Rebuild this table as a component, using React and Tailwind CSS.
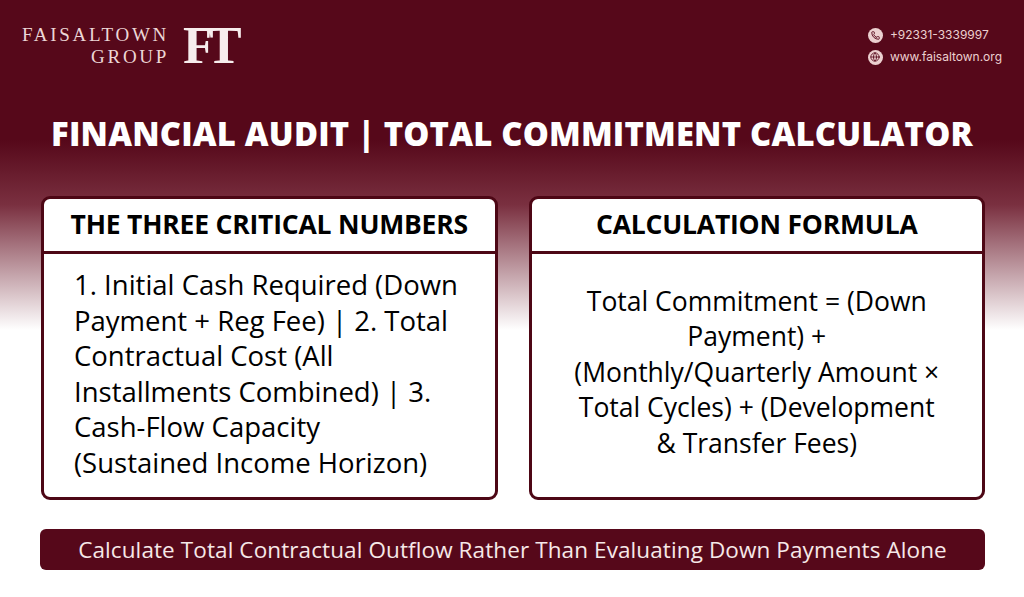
import { Phone, Globe } from 'lucide-react'

const leftLines = [
  "1. Initial Cash Required (Down",
  "Payment + Reg Fee) | 2. Total",
  "Contractual Cost (All",
  "Installments Combined) | 3.",
  "Cash-Flow Capacity",
  "(Sustained Income Horizon)",
];

const rightLines = [
  "Total Commitment = (Down",
  "Payment) +",
  "(Monthly/Quarterly Amount ×",
  "Total Cycles) + (Development",
  "& Transfer Fees)",
];

function Card({ title, children }) {
  return (
    <div className="flex flex-col h-[304px] bg-white border-[3px] border-[#4d0715] rounded-[9px] overflow-hidden">
      <div className="h-[55px] flex items-center justify-center border-b-[3px] border-[#4d0715]">
        <h2 className="text-[26.5px] font-bold text-black tracking-[-0.2px]">{title}</h2>
      </div>
      {children}
    </div>
  );
}

function App() {
  return (
    <div
      className="w-[1024px] h-[597px] overflow-hidden bg-[linear-gradient(to_bottom,#56081a_0px,#56081a_140px,#7a3040_205px,#ffffff_330px,#ffffff_597px)]"
      style={{ fontFamily: '"Open Sans", "Liberation Sans", sans-serif' }}
    >
      <div className="flex justify-between items-start pl-[22px] pr-[22px] pt-[19px]">
        <div className="flex items-center gap-[14px]">
          <div className="flex flex-col items-end text-[#ecd6d6] leading-[22px]" style={{ fontFamily: '"Liberation Serif", serif' }}>
            <span className="text-[19px] tracking-[2.7px]">FAISALTOWN</span>
            <span className="text-[19px] tracking-[2.7px]">GROUP</span>
          </div>
          <span className="text-[53px] leading-none text-[#f7eded] tracking-[-9px] font-bold" style={{ fontFamily: '"Liberation Serif", serif' }}>FT</span>
        </div>
        <div className="flex flex-col gap-[4px] pt-[7px] text-[12px] text-[#ecd0d0]" style={{ fontFamily: '"Inter", sans-serif' }}>
          <div className="flex items-center gap-[7px]">
            <span className="w-[15px] h-[15px] rounded-full bg-[#ecd0d0] flex items-center justify-center">
              <Phone size={9} strokeWidth={2.5} className="text-[#56081a]" />
            </span>
            <span>+92331-3339997</span>
          </div>
          <div className="flex items-center gap-[7px]">
            <span className="w-[15px] h-[15px] rounded-full bg-[#ecd0d0] flex items-center justify-center">
              <Globe size={10} strokeWidth={2} className="text-[#56081a]" />
            </span>
            <span>www.faisaltown.org</span>
          </div>
        </div>
      </div>

      <h1 className="mt-[42px] text-center text-[32.8px] font-extrabold text-white leading-[40px] tracking-[0.2px]">
        FINANCIAL AUDIT | TOTAL COMMITMENT CALCULATOR
      </h1>

      <div className="grid grid-cols-2 gap-[31px] pl-[41px] pr-[39px] mt-[42px]">
        <Card title="THE THREE CRITICAL NUMBERS">
          <div className="flex-1 pl-[30px] pt-[13px] text-[27.5px] leading-[35.5px] text-black">
            {leftLines.map((l) => (
              <div key={l} className="whitespace-nowrap">{l}</div>
            ))}
          </div>
        </Card>
        <Card title="CALCULATION FORMULA">
          <div className="flex-1 flex flex-col items-center justify-center text-center text-[26.5px] leading-[35.5px] text-black pb-[6px]">
            {rightLines.map((l) => (
              <div key={l} className="whitespace-nowrap">{l}</div>
            ))}
          </div>
        </Card>
      </div>

      <div className="mt-[29px] ml-[40px] mr-[39px] h-[41px] rounded-[6px] bg-[#56081a] flex items-center justify-center">
        <p className="text-[22.5px] font-medium text-[#f6e8e8] tracking-[0.1px] whitespace-nowrap">
          Calculate Total Contractual Outflow Rather Than Evaluating Down Payments Alone
        </p>
      </div>
    </div>
  );
}

export default App
